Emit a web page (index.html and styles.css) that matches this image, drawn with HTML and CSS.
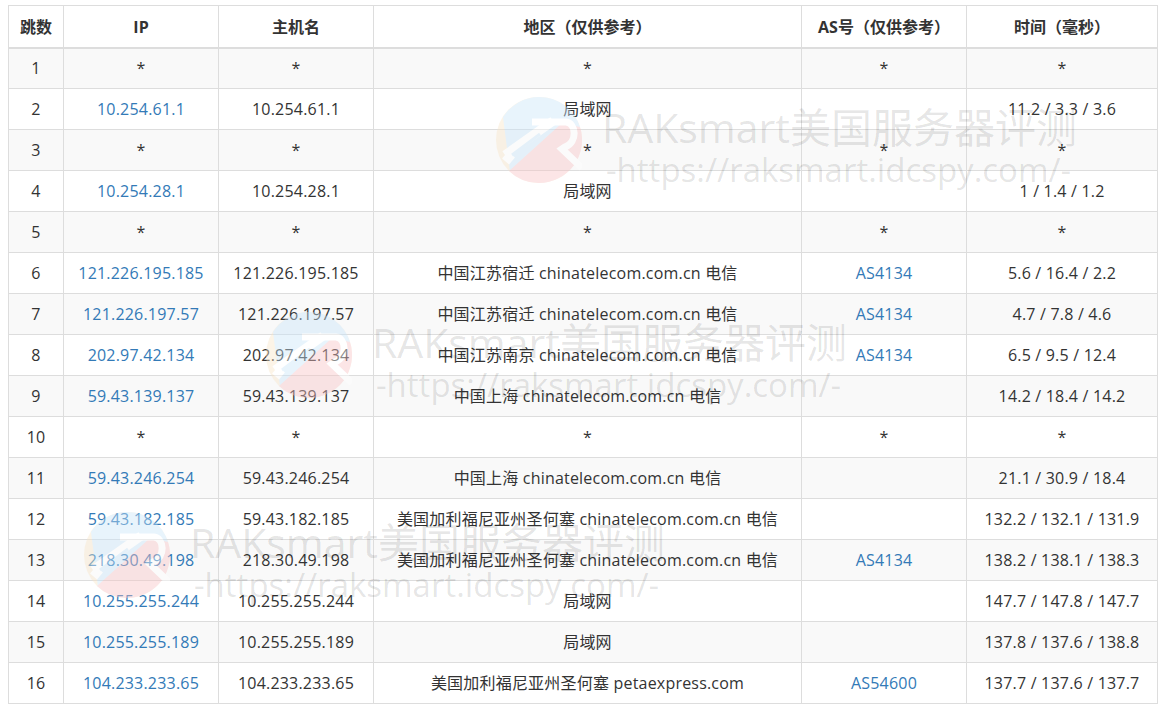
FILE: index.html
```html
<!DOCTYPE html>
<html lang="zh-CN">
<head>
<meta charset="utf-8">
<title>路由跟踪</title>
<link rel="stylesheet" href="styles.css">
</head>
<body>
<div class="wrap">
<table class="trace">
<colgroup><col class="c1"><col class="c2"><col class="c3"><col class="c4"><col class="c5"><col class="c6"></colgroup>
<thead><tr><th>跳数</th><th>IP</th><th>主机名</th><th>地区（仅供参考）</th><th>AS号（仅供参考）</th><th>时间（毫秒）</th></tr></thead>
<tbody>
<tr><td>1</td><td>*</td><td>*</td><td>*</td><td>*</td><td>*</td></tr>
<tr><td>2</td><td><a>10.254.61.1</a></td><td>10.254.61.1</td><td>局域网</td><td></td><td>11.2 / 3.3 / 3.6</td></tr>
<tr><td>3</td><td>*</td><td>*</td><td>*</td><td>*</td><td>*</td></tr>
<tr><td>4</td><td><a>10.254.28.1</a></td><td>10.254.28.1</td><td>局域网</td><td></td><td>1 / 1.4 / 1.2</td></tr>
<tr><td>5</td><td>*</td><td>*</td><td>*</td><td>*</td><td>*</td></tr>
<tr><td>6</td><td><a>121.226.195.185</a></td><td>121.226.195.185</td><td>中国江苏宿迁 chinatelecom.com.cn 电信</td><td><a>AS4134</a></td><td>5.6 / 16.4 / 2.2</td></tr>
<tr><td>7</td><td><a>121.226.197.57</a></td><td>121.226.197.57</td><td>中国江苏宿迁 chinatelecom.com.cn 电信</td><td><a>AS4134</a></td><td>4.7 / 7.8 / 4.6</td></tr>
<tr><td>8</td><td><a>202.97.42.134</a></td><td>202.97.42.134</td><td>中国江苏南京 chinatelecom.com.cn 电信</td><td><a>AS4134</a></td><td>6.5 / 9.5 / 12.4</td></tr>
<tr><td>9</td><td><a>59.43.139.137</a></td><td>59.43.139.137</td><td>中国上海 chinatelecom.com.cn 电信</td><td></td><td>14.2 / 18.4 / 14.2</td></tr>
<tr><td>10</td><td>*</td><td>*</td><td>*</td><td>*</td><td>*</td></tr>
<tr><td>11</td><td><a>59.43.246.254</a></td><td>59.43.246.254</td><td>中国上海 chinatelecom.com.cn 电信</td><td></td><td>21.1 / 30.9 / 18.4</td></tr>
<tr><td>12</td><td><a>59.43.182.185</a></td><td>59.43.182.185</td><td>美国加利福尼亚州圣何塞 chinatelecom.com.cn 电信</td><td></td><td>132.2 / 132.1 / 131.9</td></tr>
<tr><td>13</td><td><a>218.30.49.198</a></td><td>218.30.49.198</td><td>美国加利福尼亚州圣何塞 chinatelecom.com.cn 电信</td><td><a>AS4134</a></td><td>138.2 / 138.1 / 138.3</td></tr>
<tr><td>14</td><td><a>10.255.255.244</a></td><td>10.255.255.244</td><td>局域网</td><td></td><td>147.7 / 147.8 / 147.7</td></tr>
<tr><td>15</td><td><a>10.255.255.189</a></td><td>10.255.255.189</td><td>局域网</td><td></td><td>137.8 / 137.6 / 138.8</td></tr>
<tr><td>16</td><td><a>104.233.233.65</a></td><td>104.233.233.65</td><td>美国加利福尼亚州圣何塞 petaexpress.com</td><td><a>AS54600</a></td><td>137.7 / 137.6 / 137.7</td></tr>
</tbody>
</table>
<div class="mark m1">
<svg class="logo" viewBox="0 0 86 86"><circle cx="43" cy="43" r="43" fill="#f8e6c8"/><path d="M43 0a43 43 0 0 1 41 30L14 75 7 20A43 43 0 0 1 43 0z" fill="#c9e6fa"/><path d="M84 30a43 43 0 0 1-41 56 43 43 0 0 1-30-12l31-28 22-20z" fill="#f8c3c5"/><path d="M9 58 57 24M9 58l7 6" fill="none" stroke="#fff" stroke-width="9" stroke-linejoin="round"/><path d="M36 25H70c10 1 12 20-1 25l-3 2 20 19" fill="none" stroke="#fff" stroke-width="7"/><path d="M16 58 44 37" stroke="#c9e6fa" stroke-width="3"/></svg>
<div class="mtext"><div class="mt1">RAKsmart美国服务器评测</div><div class="mt2">-https://raksmart.idcspy.com/-</div></div>
</div>
<div class="mark m2">
<svg class="logo" viewBox="0 0 86 86"><circle cx="43" cy="43" r="43" fill="#f8e6c8"/><path d="M43 0a43 43 0 0 1 41 30L14 75 7 20A43 43 0 0 1 43 0z" fill="#c9e6fa"/><path d="M84 30a43 43 0 0 1-41 56 43 43 0 0 1-30-12l31-28 22-20z" fill="#f8c3c5"/><path d="M9 58 57 24M9 58l7 6" fill="none" stroke="#fff" stroke-width="9" stroke-linejoin="round"/><path d="M36 25H70c10 1 12 20-1 25l-3 2 20 19" fill="none" stroke="#fff" stroke-width="7"/><path d="M16 58 44 37" stroke="#c9e6fa" stroke-width="3"/></svg>
<div class="mtext"><div class="mt1">RAKsmart美国服务器评测</div><div class="mt2">-https://raksmart.idcspy.com/-</div></div>
</div>
<div class="mark m3">
<svg class="logo" viewBox="0 0 86 86"><circle cx="43" cy="43" r="43" fill="#f8e6c8"/><path d="M43 0a43 43 0 0 1 41 30L14 75 7 20A43 43 0 0 1 43 0z" fill="#c9e6fa"/><path d="M84 30a43 43 0 0 1-41 56 43 43 0 0 1-30-12l31-28 22-20z" fill="#f8c3c5"/><path d="M9 58 57 24M9 58l7 6" fill="none" stroke="#fff" stroke-width="9" stroke-linejoin="round"/><path d="M36 25H70c10 1 12 20-1 25l-3 2 20 19" fill="none" stroke="#fff" stroke-width="7"/><path d="M16 58 44 37" stroke="#c9e6fa" stroke-width="3"/></svg>
<div class="mtext"><div class="mt1">RAKsmart美国服务器评测</div><div class="mt2">-https://raksmart.idcspy.com/-</div></div>
</div>
</div>
</body>
</html>
```
FILE: styles.css
```css
html, body { margin: 0; padding: 0; background: #fff; overflow: hidden; }
.wrap { position: relative; padding: 5px 8px 0 8px; height: 703px; }
.trace {
  border-collapse: collapse;
  table-layout: fixed;
  width: 1149px;
  font-family: "Open Sans", "Noto Sans CJK SC", sans-serif;
  font-size: 16px;
  line-height: 22px;
  color: #333;
  border: 1px solid #ddd;
}
.c1 { width: 55px; } .c2 { width: 155px; } .c3 { width: 155px; }
.c4 { width: 428px; } .c5 { width: 165px; } .c6 { width: 191px; }
.trace th, .trace td { border: 1px solid #ddd; text-align: center; box-sizing: border-box; }
.trace th { height: 42px; padding: 2px 0 0; border-bottom-width: 2px; font-weight: 700; }
.trace td { height: 41px; padding: 0 0 1px; letter-spacing: .2px; }
.trace tbody tr:nth-child(odd) { background: #f9f9f9; }
.trace a { color: #337ab7; text-decoration: none; }
.mark { position: absolute; display: flex; align-items: flex-start; pointer-events: none; }
.m1 { left: 496px; top: 97px; }
.m2 { left: 266px; top: 312px; }
.m3 { left: 84px; top: 512px; }
.logo { width: 86px; height: 86px; flex: none; opacity: .42; }
.mtext { font-family: "Open Sans", "Noto Sans CJK SC", sans-serif; color: rgba(0, 0, 0, .11); white-space: nowrap; margin: 6px 0 0 20px; }
.mt1 { font-size: 41px; line-height: 48px; }
.mt2 { font-size: 33px; line-height: 38px; margin-left: 4px; }
```
